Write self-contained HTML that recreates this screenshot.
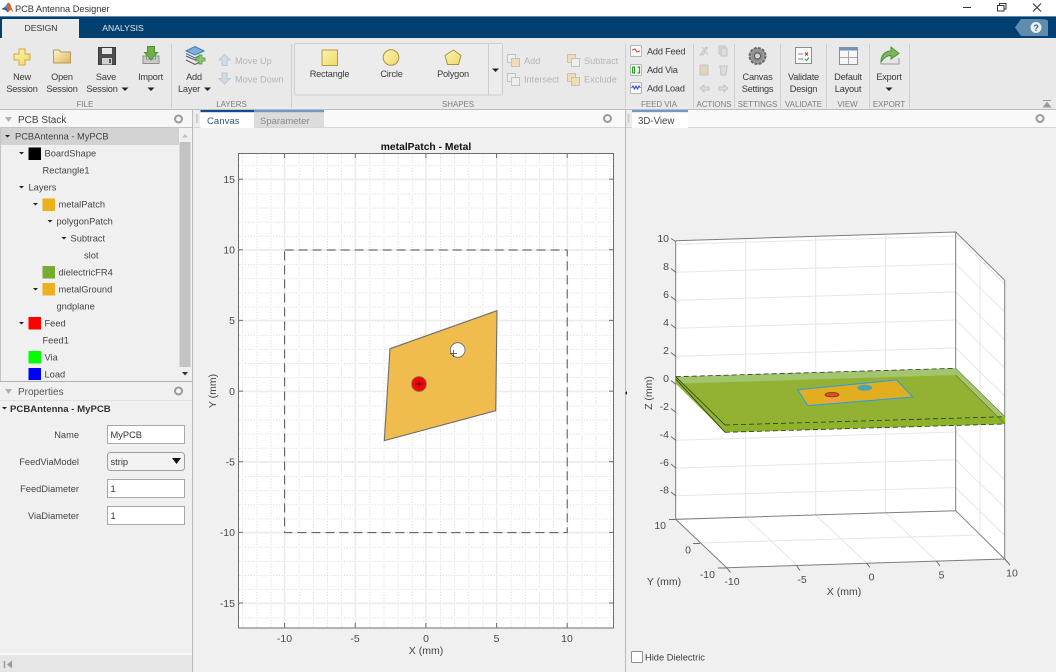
<!DOCTYPE html>
<html><head><meta charset="utf-8"><title>PCB Antenna Designer</title>
<style>
html,body{margin:0;padding:0;background:#f0f0f0;width:1056px;height:672px;overflow:hidden}
svg{display:block;filter:blur(.3px)}
text{font-family:"Liberation Sans",sans-serif;font-size:9.2px;letter-spacing:-.2px;fill:#3a3a3a}
.c{text-anchor:middle}
.e{text-anchor:end}
.g{fill:#b4b4b4;letter-spacing:0}
.s{font-size:7.9px;letter-spacing:0;fill:#7c7c7c;text-anchor:middle}
.t{font-size:9.3px;letter-spacing:0;fill:#444}
.a{font-size:10.5px;letter-spacing:0;fill:#4a4a4a}
.x{font-size:10.5px;letter-spacing:0;fill:#444}
.sep{stroke:#cfcfcf;stroke-width:1}
.maj{stroke:#ececec;stroke-width:1.3;fill:none}
.w{stroke:#e6e6e6;stroke-width:1;fill:none}
</style></head><body>
<svg width="1056" height="672" viewBox="0 0 1056 672" xmlns="http://www.w3.org/2000/svg">
<defs>
<pattern id="m" patternUnits="userSpaceOnUse" x="284.6" y="250" width="14.13" height="14.13">
<path d="M0 .5H14.13M.5 0V14.13" stroke="#d4d4d4" stroke-width="1" stroke-dasharray="1 1.826" fill="none"/>
</pattern>
<linearGradient id="y" x1="0" y1="0" x2="1" y2="1"><stop offset="0" stop-color="#fbf3b0"/><stop offset="1" stop-color="#f1d868"/></linearGradient>
<linearGradient id="b" x1="0" y1="0" x2="1" y2="1"><stop offset="0" stop-color="#fdf7d0"/><stop offset="1" stop-color="#d9b55a"/></linearGradient>
</defs>
<rect width="1056" height="672" fill="#f0f0f0"/>

<!-- title bar -->
<rect width="1056" height="16" fill="#fff"/>
<path d="M1.500 9 5 7 8 2.500 10 3.500 13.500 12.500 10.500 9.500 8 12.500 5.500 10Z" fill="#d9601e"/>
<path d="M1.500 9 5 7 7 9 8 12.500 5.500 10Z" fill="#1f5f9e"/>
<path d="M5 7 8 2.500 7.500 6.500 7 9Z" fill="#3f8fd0"/>
<text x="15" y="12" style="font-size:9.200px;letter-spacing:0;fill:#333">PCB Antenna Designer</text>
<path d="M963 7.500H971" stroke="#333" fill="none"/>
<path d="M997.500 5.500H1004V11H997.500ZM999.500 5.500V3.500H1006V9H1004" stroke="#333" fill="none"/>
<path d="M1033 3.500 1041 11.500M1041 3.500 1033 11.500" stroke="#333" fill="none"/>

<!-- navy band -->
<rect y="16" width="1056" height="22" fill="#023f71"/>
<rect y="16" width="1056" height="1" fill="#5f8bab"/>
<path d="M2 38V20q0-1 1-1H79V38Z" fill="#eaeaea"/>
<text class="c" x="41" y="31" style="font-size:8.600px;letter-spacing:0;fill:#333">DESIGN</text>
<text class="c" x="123" y="31" style="font-size:8.600px;letter-spacing:0;fill:#dfe8f0">ANALYSIS</text>
<path d="M1021 19H1039q9 0 9 2V36H1021L1015 27.500Z" fill="#5e8cad"/>
<circle cx="1036" cy="27.500" r="5.500" fill="#e8eef3"/>
<text class="c" x="1036" y="31" style="font-size:9px;font-weight:bold;fill:#345d7c">?</text>

<!-- toolstrip -->
<rect y="38" width="1056" height="71" fill="#e9e9e9"/>
<rect y="109" width="1056" height="1" fill="#bdbdbd"/>
<path class="sep" d="M171.500 44V108M291.500 44V108M625.500 44V108M693.500 44V108M734.500 44V108M780.500 44V108M826.500 44V108M869.500 44V108M909.500 44V108"/>

<!-- FILE -->
<path d="M19 49H25V54H30V60H25V65H19V60H14V54H19Z" fill="url(#y)" stroke="#d8a73a"/>
<text class="c" x="22" y="80">New</text><text class="c" x="22" y="92">Session</text>
<path d="M53.500 50H59L61 52H70.500V63H53.500Z" fill="url(#b)" stroke="#b9995a"/>
<text class="c" x="62" y="80">Open</text><text class="c" x="62" y="92">Session</text>
<path d="M98.500 47.500H115.500V64.500H98.500Z" fill="#4e4e4e" stroke="#3c3c3c"/>
<rect x="102" y="48" width="10" height="6" fill="#e6e6e6"/><rect x="102" y="58" width="10" height="6.500" fill="#cfcfcf"/><rect x="109" y="59" width="2" height="4" fill="#555"/>
<text class="c" x="106" y="80">Save</text><text class="c" x="102" y="92">Session</text>
<path d="M121.500 87.500H128.500L125 91Z" fill="#222"/>
<path d="M143 56V63.500H159V56H155.500V59H146.500V56Z" fill="#c9c9c9" stroke="#8f8f8f"/>
<path d="M147.500 46.500H154.500V52.500H157.500L151 60 144.500 52.500H147.500Z" fill="#6fb04a" stroke="#4f9135"/>
<text class="c" x="150.500" y="80">Import</text>
<path d="M147.500 87.500H154.500L151 91Z" fill="#222"/>

<!-- LAYERS -->
<path d="M186 51 195 46.500 204 51 195 55Z" fill="#7fb0dc" stroke="#3f78ac"/>
<path d="M186 56 195 60 201 57.500" fill="none" stroke="#555"/>
<path d="M186 60 195 64.500 199 62.500" fill="none" stroke="#555"/>
<path d="M186 53.500 195 58 201 55" fill="none" stroke="#4a6e92"/>
<path d="M199 55H202V58H205V61H202V64H199V61H196V58H199Z" fill="#8dc96a" stroke="#4f9135" stroke-width=".7"/>
<text class="c" x="194" y="80">Add</text><text class="c" x="189" y="92">Layer</text>
<path d="M204 87.500H211L207.500 91Z" fill="#222"/>
<path d="M224.500 54.500 230 60H227V65.500H222V60H219Z" fill="#cfdde8" stroke="#bcc9d4"/>
<path d="M222 73H227V78.500H230L224.500 84 219 78.500H222Z" fill="#cfdde8" stroke="#bcc9d4"/>
<text class="g" x="235" y="64">Move Up</text><text class="g" x="235" y="82.500">Move Down</text>

<!-- SHAPES gallery -->
<rect x="294.500" y="43.500" width="208" height="51.500" rx="2" fill="#ececec" stroke="#cdcdcd"/>
<path d="M488.500 44V95" stroke="#cdcdcd"/>
<rect x="322" y="50" width="15.500" height="15.500" fill="url(#y)" stroke="#b99a45"/>
<circle cx="391" cy="57.500" r="7.800" fill="url(#y)" stroke="#a8924e"/>
<path d="M453.500 50 461 55.500 458.500 64.500H447.500L445 55.500Z" fill="url(#y)" stroke="#a8924e"/>
<text class="c" x="329.500" y="77">Rectangle</text>
<text class="c" x="391.500" y="77">Circle</text>
<text class="c" x="453" y="77">Polygon</text>
<path d="M492 68.500H499L495.500 72Z" fill="#222"/>

<!-- boolean ops -->
<g fill="#eee" stroke="#c8c2b4">
<rect x="507.500" y="54.500" width="8" height="8"/><rect x="511.500" y="58.500" width="8" height="8" fill="#efdcb8"/>
<rect x="507.500" y="73.500" width="8" height="8"/><rect x="511.500" y="77.500" width="8" height="8"/>
<rect x="567.500" y="54.500" width="8" height="8" fill="#efdcb8"/><rect x="571.500" y="58.500" width="8" height="8"/>
<rect x="567.500" y="73.500" width="8" height="8" fill="#efdcb8"/><rect x="571.500" y="77.500" width="8" height="8" fill="#efdcb8"/>
</g>
<text class="g" x="524" y="64">Add</text><text class="g" x="524" y="82.500">Intersect</text>
<text class="g" x="584" y="64">Subtract</text><text class="g" x="584" y="82.500">Exclude</text>

<!-- feed via -->
<g fill="#fafafa" stroke="#b5b5b5"><rect x="630.500" y="45.500" width="11" height="11" rx="1"/><rect x="630.500" y="64.500" width="11" height="11" rx="1"/><rect x="630.500" y="82.500" width="11" height="11" rx="1"/></g>
<path d="M632 50 635 49 637 52 640 51" fill="none" stroke="#e04040" stroke-width="1"/>
<path d="M632.500 67V73M639.500 67V73M632.500 67H634.500V73H632.500M637.500 67H639.500V73H637.500" fill="none" stroke="#1fa51f" stroke-width="1.200"/>
<path d="M631.500 88 633 86 634.500 89 636 86 637.500 89 639 86 640.500 88" fill="none" stroke="#2a3fe0" stroke-width="1"/>
<text x="647" y="54.500">Add Feed</text><text x="647" y="73">Add Via</text><text x="647" y="91.500">Add Load</text>

<!-- actions ghost -->
<g fill="#dcdcdc" stroke="#c4c4c4">
<path d="M700 55 706 47 707.500 48 703 55ZM708 55 702 47"/><rect x="719" y="46" width="6" height="8"/><rect x="721" y="48" width="6" height="8"/>
<rect x="700" y="65" width="8" height="10" fill="#e3d3b8"/><path d="M719 66H728M720 66 721 75H726L727 66"/>
<path d="M700 88 704 85V87H709V90H704V92Z" fill="#d6e0ea"/><path d="M728 88 724 85V87H719V90H724V92Z" fill="#d6e0ea"/>
</g>

<!-- settings -->
<circle cx="757.500" cy="56" r="8" fill="#9c9c9c" stroke="#6a6a6a" stroke-dasharray="3 1.200" stroke-width="2"/>
<circle cx="757.500" cy="56" r="5.500" fill="#8d8d8d"/><circle cx="757.500" cy="56" r="3" fill="#d6d6d6" stroke="#555"/>
<text class="c" x="757.500" y="80">Canvas</text><text class="c" x="757.500" y="92">Settings</text>
<!-- validate -->
<rect x="795.500" y="47.500" width="16" height="16" fill="#fafafa" stroke="#8e8e8e"/>
<path d="M798 54H803M798 59H803" stroke="#888"/><path d="M805 52.500 808 55.500M808 52.500 805 55.500" stroke="#d83030"/><path d="M805 59 806.500 60.500 809 57.500" stroke="#2f9f2f" fill="none"/>
<text class="c" x="803.500" y="80">Validate</text><text class="c" x="803.500" y="92">Design</text>
<!-- layout -->
<rect x="839.500" y="47.500" width="18" height="17" fill="#f7f7f7" stroke="#8e8e8e"/>
<rect x="839.500" y="47.500" width="18" height="3" fill="#6f94b8"/>
<path d="M848.500 51V64M840 57.500H857" stroke="#a8a8a8"/>
<text class="c" x="848" y="80">Default</text><text class="c" x="848" y="92">Layout</text>
<!-- export -->
<path d="M881 60V64H899V58" fill="#e4e4e4" stroke="#9a9a9a"/>
<path d="M881 62C881 54 886 51 891 51V47L899 53.500 891 59V55.500C887 55.500 884 57.500 881 62Z" fill="#7cb55a" stroke="#4f9135"/>
<text class="c" x="889" y="80">Export</text>
<path d="M885.500 87.500H892.500L889 91Z" fill="#222"/>

<text class="s" x="85" y="107">FILE</text><text class="s" x="231.500" y="107">LAYERS</text><text class="s" x="458" y="107">SHAPES</text>
<text class="s" x="659" y="107">FEED VIA</text><text class="s" x="714" y="107">ACTIONS</text><text class="s" x="757.500" y="107">SETTINGS</text>
<text class="s" x="803.500" y="107">VALIDATE</text><text class="s" x="847.500" y="107">VIEW</text><text class="s" x="889" y="107">EXPORT</text>
<path d="M1043 100.500H1051M1043.500 107 1047 102.500 1050.500 107Z" fill="#9a9a9a" stroke="#9a9a9a"/>

<!-- left panel -->
<rect x="0" y="110" width="192.500" height="562" fill="#f0f0f0"/>
<rect x="192" y="110" width="1" height="562" fill="#bbb"/>
<rect x="625" y="110" width="1" height="562" fill="#bbb"/>
<rect x="0" y="110" width="192" height="17" fill="#f7f7f7"/>
<rect x="0" y="127" width="192" height="1" fill="#c4c4c4"/>
<path d="M5 117H12L8.500 122Z" fill="#b0b0b0"/>
<text x="18" y="123" style="font-size:10px;letter-spacing:0;fill:#444">PCB Stack</text>
<circle cx="178.500" cy="119" r="3.500" fill="#f7f7f7" stroke="#9a9a9a" stroke-width="2"/>

<rect x="1" y="128" width="178" height="17" fill="#d2d2d2"/>
<rect x="179" y="128" width="12" height="253" fill="#f0f0f0"/>
<rect x="179.500" y="142" width="11" height="225" fill="#c3c3c3"/>
<path d="M182 137.500H188L185 134Z" fill="#c0c0c0"/><path d="M182 372H188L185 375.500Z" fill="#333"/>
<rect x="0" y="381" width="192" height="1" fill="#b0b0b0"/>
<rect x="0" y="127" width="1" height="254" fill="#c4c4c4"/>

<g fill="#222">
<path d="M5 135H10L7.500 137.500Z"/><path d="M19 152H24L21.500 154.500Z"/><path d="M19 186H24L21.500 188.500Z"/>
<path d="M33 203H38L35.500 205.500Z"/><path d="M47.500 220H52.500L50 222.500Z"/><path d="M61.500 237H66.500L64 239.500Z"/>
<path d="M33 288H38L35.500 290.500Z"/><path d="M19 322H24L21.500 324.500Z"/>
</g>
<rect x="28.500" y="147.500" width="12.500" height="12.500" fill="#000"/>
<rect x="42.500" y="198.500" width="12.500" height="12.500" fill="#edb120"/>
<rect x="42.500" y="266" width="12.500" height="12.500" fill="#77ac30"/>
<rect x="42.500" y="283" width="12.500" height="12.500" fill="#edb120"/>
<rect x="28.500" y="317" width="12.500" height="12.500" fill="#ff0000"/>
<rect x="28.500" y="351" width="12.500" height="12.500" fill="#00ff00"/>
<rect x="28.500" y="368" width="12.500" height="12" fill="#0000ff"/>

<text class="t" x="15" y="139.500">PCBAntenna - MyPCB</text>
<text class="t" x="44.500" y="156.500">BoardShape</text>
<text class="t" x="42.500" y="173.500">Rectangle1</text>
<text class="t" x="28.500" y="190.500">Layers</text>
<text class="t" x="58.500" y="207.500">metalPatch</text>
<text class="t" x="56.500" y="224.500">polygonPatch</text>
<text class="t" x="70.500" y="241.500">Subtract</text>
<text class="t" x="84" y="258.500">slot</text>
<text class="t" x="58.500" y="275.500">dielectricFR4</text>
<text class="t" x="58.500" y="292.500">metalGround</text>
<text class="t" x="56.500" y="309.500">gndplane</text>
<text class="t" x="44.500" y="326.500">Feed</text>
<text class="t" x="42.500" y="343.500">Feed1</text>
<text class="t" x="44.500" y="360.500">Via</text>
<text class="t" x="44.500" y="377.500">Load</text>

<!-- properties -->
<path d="M5 389H12L8.500 394Z" fill="#b0b0b0"/>
<text x="18" y="395" style="font-size:10px;letter-spacing:0;fill:#555">Properties</text>
<circle cx="178.500" cy="391" r="3.500" fill="#f7f7f7" stroke="#9a9a9a" stroke-width="2"/>
<rect x="0" y="400" width="192" height="1" fill="#e2e2e2"/>
<path d="M2 407H7L4.500 409.500Z" fill="#222"/>
<text x="10" y="412" style="font-size:9.600px;letter-spacing:0;font-weight:bold;fill:#333">PCBAntenna - MyPCB</text>
<text class="t e" x="79" y="438">Name</text>
<text class="t e" x="79" y="465">FeedViaModel</text>
<text class="t e" x="79" y="492">FeedDiameter</text>
<text class="t e" x="79" y="519">ViaDiameter</text>
<rect x="107.500" y="425.500" width="77" height="18" fill="#fff" stroke="#a8a8a8"/>
<rect x="107.500" y="452.500" width="77" height="18" rx="3" fill="#f3f3f3" stroke="#a0a0a0"/>
<rect x="107.500" y="479.500" width="77" height="18" fill="#fff" stroke="#a8a8a8"/>
<rect x="107.500" y="506.500" width="77" height="18" fill="#fff" stroke="#a8a8a8"/>
<text class="t" x="110.500" y="438" style="fill:#333">MyPCB</text>
<text class="t" x="110.500" y="465" style="fill:#333">strip</text>
<text class="t" x="110.500" y="492" style="fill:#333">1</text>
<text class="t" x="110.500" y="519" style="fill:#333">1</text>
<path d="M172 458H181L176.500 464Z" fill="#111"/>
<rect x="0" y="653" width="192" height="2" fill="#fafafa"/>
<rect x="0" y="655" width="192" height="17" fill="#e6e6e6"/>
<path d="M4.500 661V668" stroke="#999" stroke-width="1.500"/><path d="M7 664.500 12 660.500V668.500Z" fill="#999"/>

<!-- center tabs -->
<rect x="193" y="110" width="432" height="17" fill="#f9f9f9"/>
<rect x="193" y="127" width="432" height="1" fill="#d6d6d6"/>
<rect x="193" y="110" width="7" height="17" fill="#ececec"/>
<rect x="196" y="114" width="2" height="9" fill="#cfcfcf"/>
<rect x="200.500" y="110" width="53.500" height="18" fill="#fff"/>
<rect x="200.500" y="110" width="53.500" height="2.200" fill="#0f4d90"/>
<text x="207" y="124" style="font-size:9.600px;letter-spacing:0;fill:#33587c">Canvas</text>
<rect x="254" y="110" width="70" height="17" fill="#dcdcdc"/>
<rect x="254" y="110" width="70" height="2.200" fill="#6f9ac8"/>
<text x="260" y="124" style="font-size:9.500px;letter-spacing:0;fill:#8a8a8a">Sparameter</text>
<circle cx="607.500" cy="118.500" r="3.500" fill="#f7f7f7" stroke="#9a9a9a" stroke-width="2"/>

<!-- right tabs -->
<rect x="626" y="110" width="430" height="17" fill="#f9f9f9"/>
<rect x="626" y="127" width="430" height="1" fill="#d6d6d6"/>
<rect x="626" y="110" width="6" height="17" fill="#ececec"/>
<rect x="627.500" y="114" width="2" height="9" fill="#cfcfcf"/>
<rect x="632" y="110" width="56" height="18" fill="#fff"/>
<rect x="632" y="110" width="56" height="2.200" fill="#6f9ac8"/>
<text x="638" y="124" style="font-size:9.700px;letter-spacing:0;fill:#444">3D-View</text>
<circle cx="1040" cy="118.500" r="3.500" fill="#f7f7f7" stroke="#9a9a9a" stroke-width="2"/>

<!-- 2D axes -->
<text class="c" x="426" y="150" style="font-size:10.300px;letter-spacing:0;font-weight:bold;fill:#111">metalPatch - Metal</text>
<rect x="238" y="153" width="376" height="475" fill="#fff"/>
<rect x="238" y="153" width="376" height="475" fill="url(#m)"/>
<path class="maj" d="M284.600 153V628M355.300 153V628M425.900 153V628M496.600 153V628M567.200 153V628M238 179.100H614M238 249.800H614M238 320.400H614M238 391.100H614M238 461.700H614M238 532.400H614M238 603H614"/>
<rect x="238.500" y="153.500" width="375" height="474.500" fill="none" stroke="#6e6e6e"/>
<path d="M284.600 153V158M355.300 153V158M425.900 153V158M496.600 153V158M567.200 153V158M284.600 628V623M355.300 628V623M425.900 628V623M496.600 628V623M567.200 628V623M238 179.100H243M238 249.800H243M238 320.400H243M238 391.100H243M238 461.700H243M238 532.400H243M238 603H243M614 179.100H609M614 249.800H609M614 320.400H609M614 391.100H609M614 461.700H609M614 532.400H609M614 603H609" stroke="#6e6e6e" fill="none"/>
<text class="a e" x="235" y="183">15</text><text class="a e" x="235" y="253.500">10</text><text class="a e" x="235" y="324">5</text><text class="a e" x="235" y="395">0</text><text class="a e" x="235" y="465.500">-5</text><text class="a e" x="235" y="536">-10</text><text class="a e" x="235" y="607">-15</text>
<text class="a c" x="284.500" y="642">-10</text><text class="a c" x="355" y="642">-5</text><text class="a c" x="426" y="642">0</text><text class="a c" x="496.500" y="642">5</text><text class="a c" x="567" y="642">10</text>
<text class="x c" x="426" y="654">X (mm)</text>
<text class="x c" transform="translate(216 391) rotate(-90)">Y (mm)</text>
<rect x="284.600" y="250" width="282.600" height="282.600" fill="none" stroke="#555" stroke-width="1" stroke-dasharray="9 5"/>
<path d="M390 348.700 497 310.700 495.700 410.700 384.300 440.700Z" fill="#f0bc4e" stroke="#6e6e6e" stroke-width="1.100"/>
<circle cx="457.700" cy="350" r="7.300" fill="#fff" stroke="#666" stroke-width=".8"/>
<path d="M450 353.500H457M453.500 350V357" stroke="#333" stroke-width=".7"/>
<circle cx="419" cy="384" r="7.300" fill="#f00" stroke="#666" stroke-width=".8"/>
<path d="M415 384H423M419 380V388" stroke="#7a1010" stroke-width="1.200"/>

<!-- 3D axes -->
<path d="M675.700 240.700 955.700 232 1004.700 280.300V559L726.700 567.700 675.700 519.300Z" fill="#fff"/>
<path class="w" d="M745.700 238.500V517M815.700 236.300V515M885.700 234.200V512.800M980 256.200V533.500"/>
<path class="w" d="M675.700 244.300 955.700 236M675.700 272.300 955.700 264M675.700 300.300 955.700 292M675.700 328.300 955.700 320M675.700 356.300 955.700 348M675.700 440.300 955.700 432M675.700 468 955.700 459.700M675.700 495.800 955.700 487.500"/>
<path class="w" d="M955.700 236 1004.700 284M955.700 264 1004.700 312M955.700 292 1004.700 340M955.700 320 1004.700 368M955.700 348 1004.700 396M955.700 432 1004.700 480M955.700 459.700 1004.700 507.700M955.700 487.500 1004.700 535.500"/>
<path class="w" d="M745.700 517 796.500 565M815.700 515 866.500 563M885.700 512.800 936.500 561M698 543 980 535"/>
<path d="M675.700 240.700 955.700 232 1004.700 280.300V559M675.700 240.700V519.300L955.700 510.700 1004.700 559 726.700 567.700 675.700 519.300M955.700 232V510.700" fill="none" stroke="#7e7e7e" stroke-width="1"/>
<g stroke="#6e6e6e" fill="none">
<path d="M671 238.500 675.700 241.500M671 268.500 675.700 272.300M671 296.500 675.700 300.300M671 324.500 675.700 328.300M671 352.500 675.700 356.300M671 380.500 675.700 384.300M671 408.500 675.700 412.300M671 436.500 675.700 440.300M671 464 675.700 468M671 492 675.700 495.800"/>
<path d="M669 519.500H675.700M693 543.500H700M718 568H726.700M726.700 567.700 730.500 572.500M796.500 565.500 800 570.500M866.500 563 870 567.500M936.500 561 940 566M1004.700 559 1010 565"/>
</g>
<!-- board -->
<path d="M675.700 376.700 955.700 368.300 1005 416.700V424L725 432.300 675.700 383.500Z" fill="#93b233"/>
<path d="M675.700 376.700 955.700 368.300 955.700 375 683 383.500Z" fill="#a2c56e"/>
<path d="M955.700 368.300 1005 416.700V424L955.700 375Z" fill="#a2c56e"/>
<path d="M725 425 1005 416.700V424L725 432.300Z" fill="#8db32a"/>
<path d="M675.700 376.700 955.700 368.300M725 425 1005 416.700M725 432.300 1005 424" fill="none" stroke="#333" stroke-width=".8" stroke-dasharray="5 3"/>
<path d="M675.700 376.700 725 425M675.700 379 725 432.300" fill="none" stroke="#2a3a10" stroke-width=".8"/>
<path d="M955.700 368.300 1005 416.700M955.700 375 1005 424" fill="none" stroke="#5c7a30" stroke-width=".6"/>
<path d="M797.700 389.700 896.700 380 912.700 397 807.700 405.700Z" fill="#e2ae20" stroke="#2d9fe0" stroke-width="1.100"/>
<rect x="825" y="394.700" width="14" height="8" fill="#f2a23a"/>
<ellipse cx="832" cy="394.700" rx="7" ry="2.300" fill="#d8501c" stroke="#6a2a10" stroke-width=".6"/>
<ellipse cx="864.700" cy="387.700" rx="7" ry="2.600" fill="#4fa6a8" stroke="#2d9fe0" stroke-width=".6"/>

<text class="a e" x="669" y="242">10</text><text class="a e" x="669" y="270">8</text><text class="a e" x="669" y="298">6</text><text class="a e" x="669" y="326">4</text><text class="a e" x="669" y="354">2</text><text class="a e" x="669" y="382">0</text><text class="a e" x="669" y="410">-2</text><text class="a e" x="669" y="438">-4</text><text class="a e" x="669" y="466">-6</text><text class="a e" x="669" y="493.500">-8</text>
<text class="a e" x="666" y="529">10</text><text class="a e" x="691" y="553.500">0</text><text class="a e" x="715" y="578">-10</text>
<text class="a c" x="732" y="585">-10</text><text class="a c" x="802" y="583">-5</text><text class="a c" x="871.500" y="580.500">0</text><text class="a c" x="941.500" y="578.500">5</text><text class="a c" x="1012" y="576.500">10</text>
<text class="x c" x="844" y="595">X (mm)</text>
<text class="x c" x="664" y="585">Y (mm)</text>
<text class="x c" transform="translate(652 393) rotate(-90)">Z (mm)</text>
<path d="M627 391V395L625 393Z" fill="#222"/>

<rect x="631.500" y="651.500" width="11" height="11" rx="1" fill="#fff" stroke="#8e8e8e"/>
<text x="645" y="660.500" style="font-size:9.300px;letter-spacing:0;fill:#3c3c3c">Hide Dielectric</text>
</svg>
</body></html>
